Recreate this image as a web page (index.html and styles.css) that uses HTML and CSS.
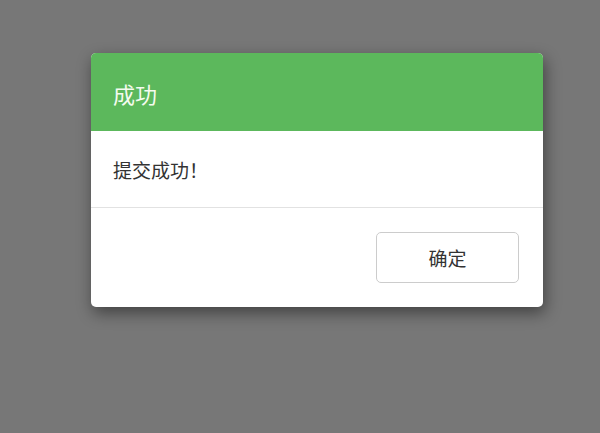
FILE: index.html
```html
<!DOCTYPE html>
<html lang="zh-CN">
<head>
<meta charset="utf-8">
<title>成功</title>
<link rel="stylesheet" href="styles.css">
</head>
<body>
<div class="backdrop">
  <div class="modal">
    <div class="modal-header">
      <h4 class="modal-title">成功</h4>
    </div>
    <div class="modal-body">提交成功！</div>
    <div class="modal-footer">
      <button class="btn" type="button">确定</button>
    </div>
  </div>
</div>
</body>
</html>
```
FILE: styles.css
```css
html, body {
  margin: 0;
  padding: 0;
  height: 100%;
}
body {
  background: #777777;
  font-family: "Noto Sans CJK SC", "Noto Sans", sans-serif;
}
.backdrop {
  padding: 53px 0 0 91px;
}
.modal {
  width: 452px;
  background: #ffffff;
  border-radius: 5px;
  overflow: hidden;
  box-shadow: 2px 6px 16px rgba(0, 0, 0, 0.45);
}
.modal-header {
  background: #5cb85c;
  height: 78px;
  display: flex;
  align-items: center;
  padding: 2px 22px 0;
  box-sizing: border-box;
}
.modal-title {
  margin: 0;
  font-size: 22px;
  font-weight: normal;
  color: #f4fbef;
  line-height: 1;
}
.modal-body {
  height: 77px;
  display: flex;
  align-items: center;
  padding: 0 22px;
  box-sizing: border-box;
  font-size: 19px;
  color: #333333;
  border-bottom: 1px solid #e2e2e2;
}
.modal-footer {
  display: flex;
  justify-content: flex-end;
  padding: 24px 24px 24px;
}
.btn {
  width: 143px;
  height: 51px;
  background: #ffffff;
  border: 1px solid #cccccc;
  border-radius: 5px;
  font-family: inherit;
  font-size: 19px;
  color: #333333;
  padding: 0;
  cursor: pointer;
}
```
